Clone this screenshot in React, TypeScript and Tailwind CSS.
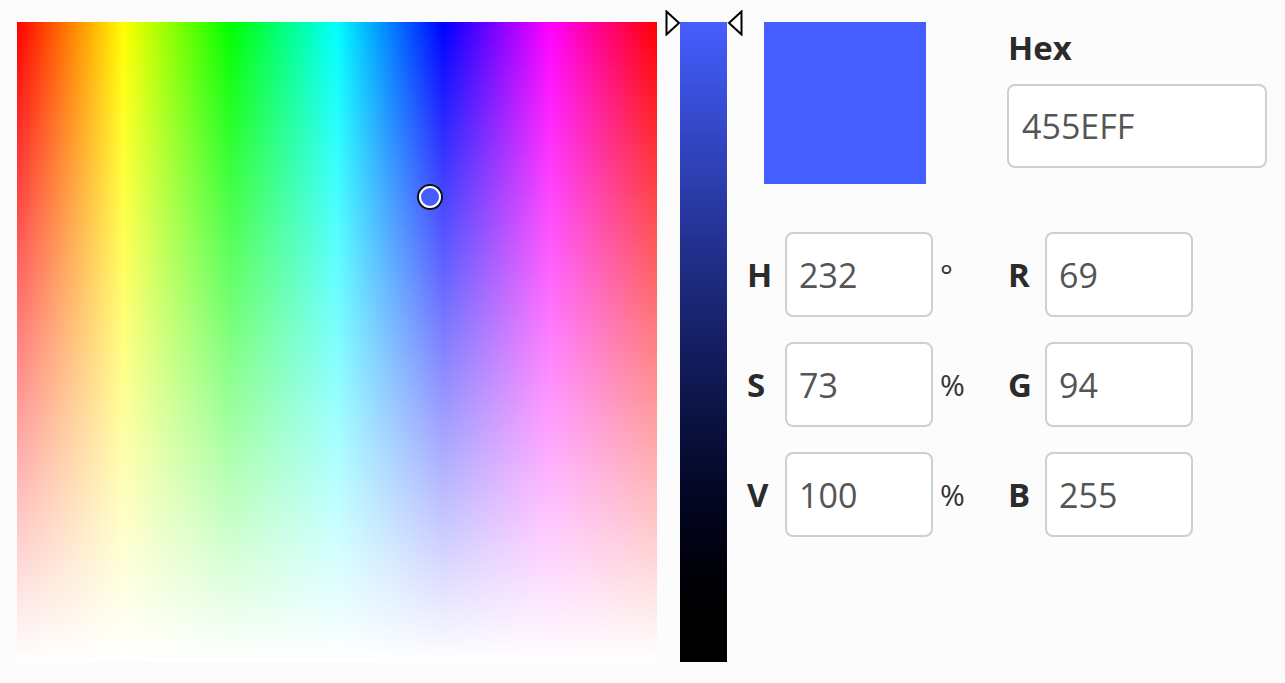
const HSV = { h: 232, s: 73, v: 100 };
const RGB = { r: 69, g: 94, b: 255 };
const HEX = "455EFF";
const FIELD = 640;

function Field() {
  const x = (HSV.h / 360) * FIELD;
  const y = (1 - HSV.s / 100) * FIELD;
  return (
    <div className="relative h-[640px] w-[640px] shrink-0 bg-[linear-gradient(to_right,#ff0000,#ffff00,#00ff00,#00ffff,#0000ff,#ff00ff,#ff0000)]">
      <div className="absolute inset-0 bg-linear-to-b from-white/0 to-white" />
      {/* picker handle */}
      <div
        className="absolute h-[26px] w-[26px] -translate-x-1/2 -translate-y-1/2 rounded-full border-2 border-[#111]"
        style={{ left: x + 1, top: y + 2 }}
      >
        <div className="h-full w-full rounded-full border-2 border-white bg-[#455EFF]" />
      </div>
    </div>
  );
}

function ValueSlider() {
  return (
    <div className="relative ml-[23px] h-[640px] w-[47px] shrink-0 bg-linear-to-b from-[#455EFF] to-black">
      <svg className="absolute -left-[15px] -top-[12px]" width="16" height="26" viewBox="0 0 16 26">
        <path d="M1.5 1.5 L14 13 L1.5 24.5 Z" fill="white" stroke="black" strokeWidth="2" />
      </svg>
      <svg className="absolute -right-[16px] -top-[12px]" width="16" height="26" viewBox="0 0 16 26">
        <path d="M14.5 1.5 L2 13 L14.5 24.5 Z" fill="white" stroke="black" strokeWidth="2" />
      </svg>
    </div>
  );
}

function NumField({ value, wide }: { value: string; wide?: boolean }) {
  return (
    <input
      readOnly
      defaultValue={value}
      className={
        (wide ? "h-[84px] w-[260px] pl-[13px] " : "h-[85px] w-[148px] pl-[12px] ") +
        "rounded-[8px] border-[2.5px] border-[#cfcfcf] bg-white text-[34px] text-[#555555] outline-none"
      }
    />
  );
}

const ROWS = [
  { l: "H", v: String(HSV.h), unit: "°", l2: "R", v2: String(RGB.r) },
  { l: "S", v: String(HSV.s), unit: "%", l2: "G", v2: String(RGB.g) },
  { l: "V", v: String(HSV.v), unit: "%", l2: "B", v2: String(RGB.b) },
];

export default function App() {
  return (
    <div className="min-h-[683px] w-full bg-[#fcfcfc] pl-[17px] pt-[22px] font-['Open_Sans',sans-serif]">
      <div className="flex items-start">
        <Field />
        <ValueSlider />

        <div className="ml-[20px] flex flex-col">
          {/* swatch + hex */}
          <div className="flex items-start">
            <div className="ml-[17px] h-[162px] w-[162px] bg-[#455EFF]" />
            <div className="ml-[82px] flex flex-col">
              <div className="mt-[6px] mb-[16px] text-[33px] leading-[40px] font-bold text-[#2b2b2b]">Hex</div>
              <div className="-ml-px">
                <NumField value={HEX} wide />
              </div>
            </div>
          </div>

          {/* channel rows */}
          <div className="mt-[48px] grid grid-cols-[38px_148px_75px_37px_148px] gap-y-[25px]">
            {ROWS.map((r) => (
              <div key={r.l} className="contents">
                <div className="flex h-[85px] items-center text-[33px] font-bold text-[#2b2b2b]">{r.l}</div>
                <NumField value={r.v} />
                <div className="flex h-[85px] items-center pl-[7px] text-[30px] text-[#333333]">{r.unit}</div>
                <div className="flex h-[85px] items-center text-[33px] font-bold text-[#2b2b2b]">{r.l2}</div>
                <NumField value={r.v2} />
              </div>
            ))}
          </div>
        </div>
      </div>
    </div>
  );
}
